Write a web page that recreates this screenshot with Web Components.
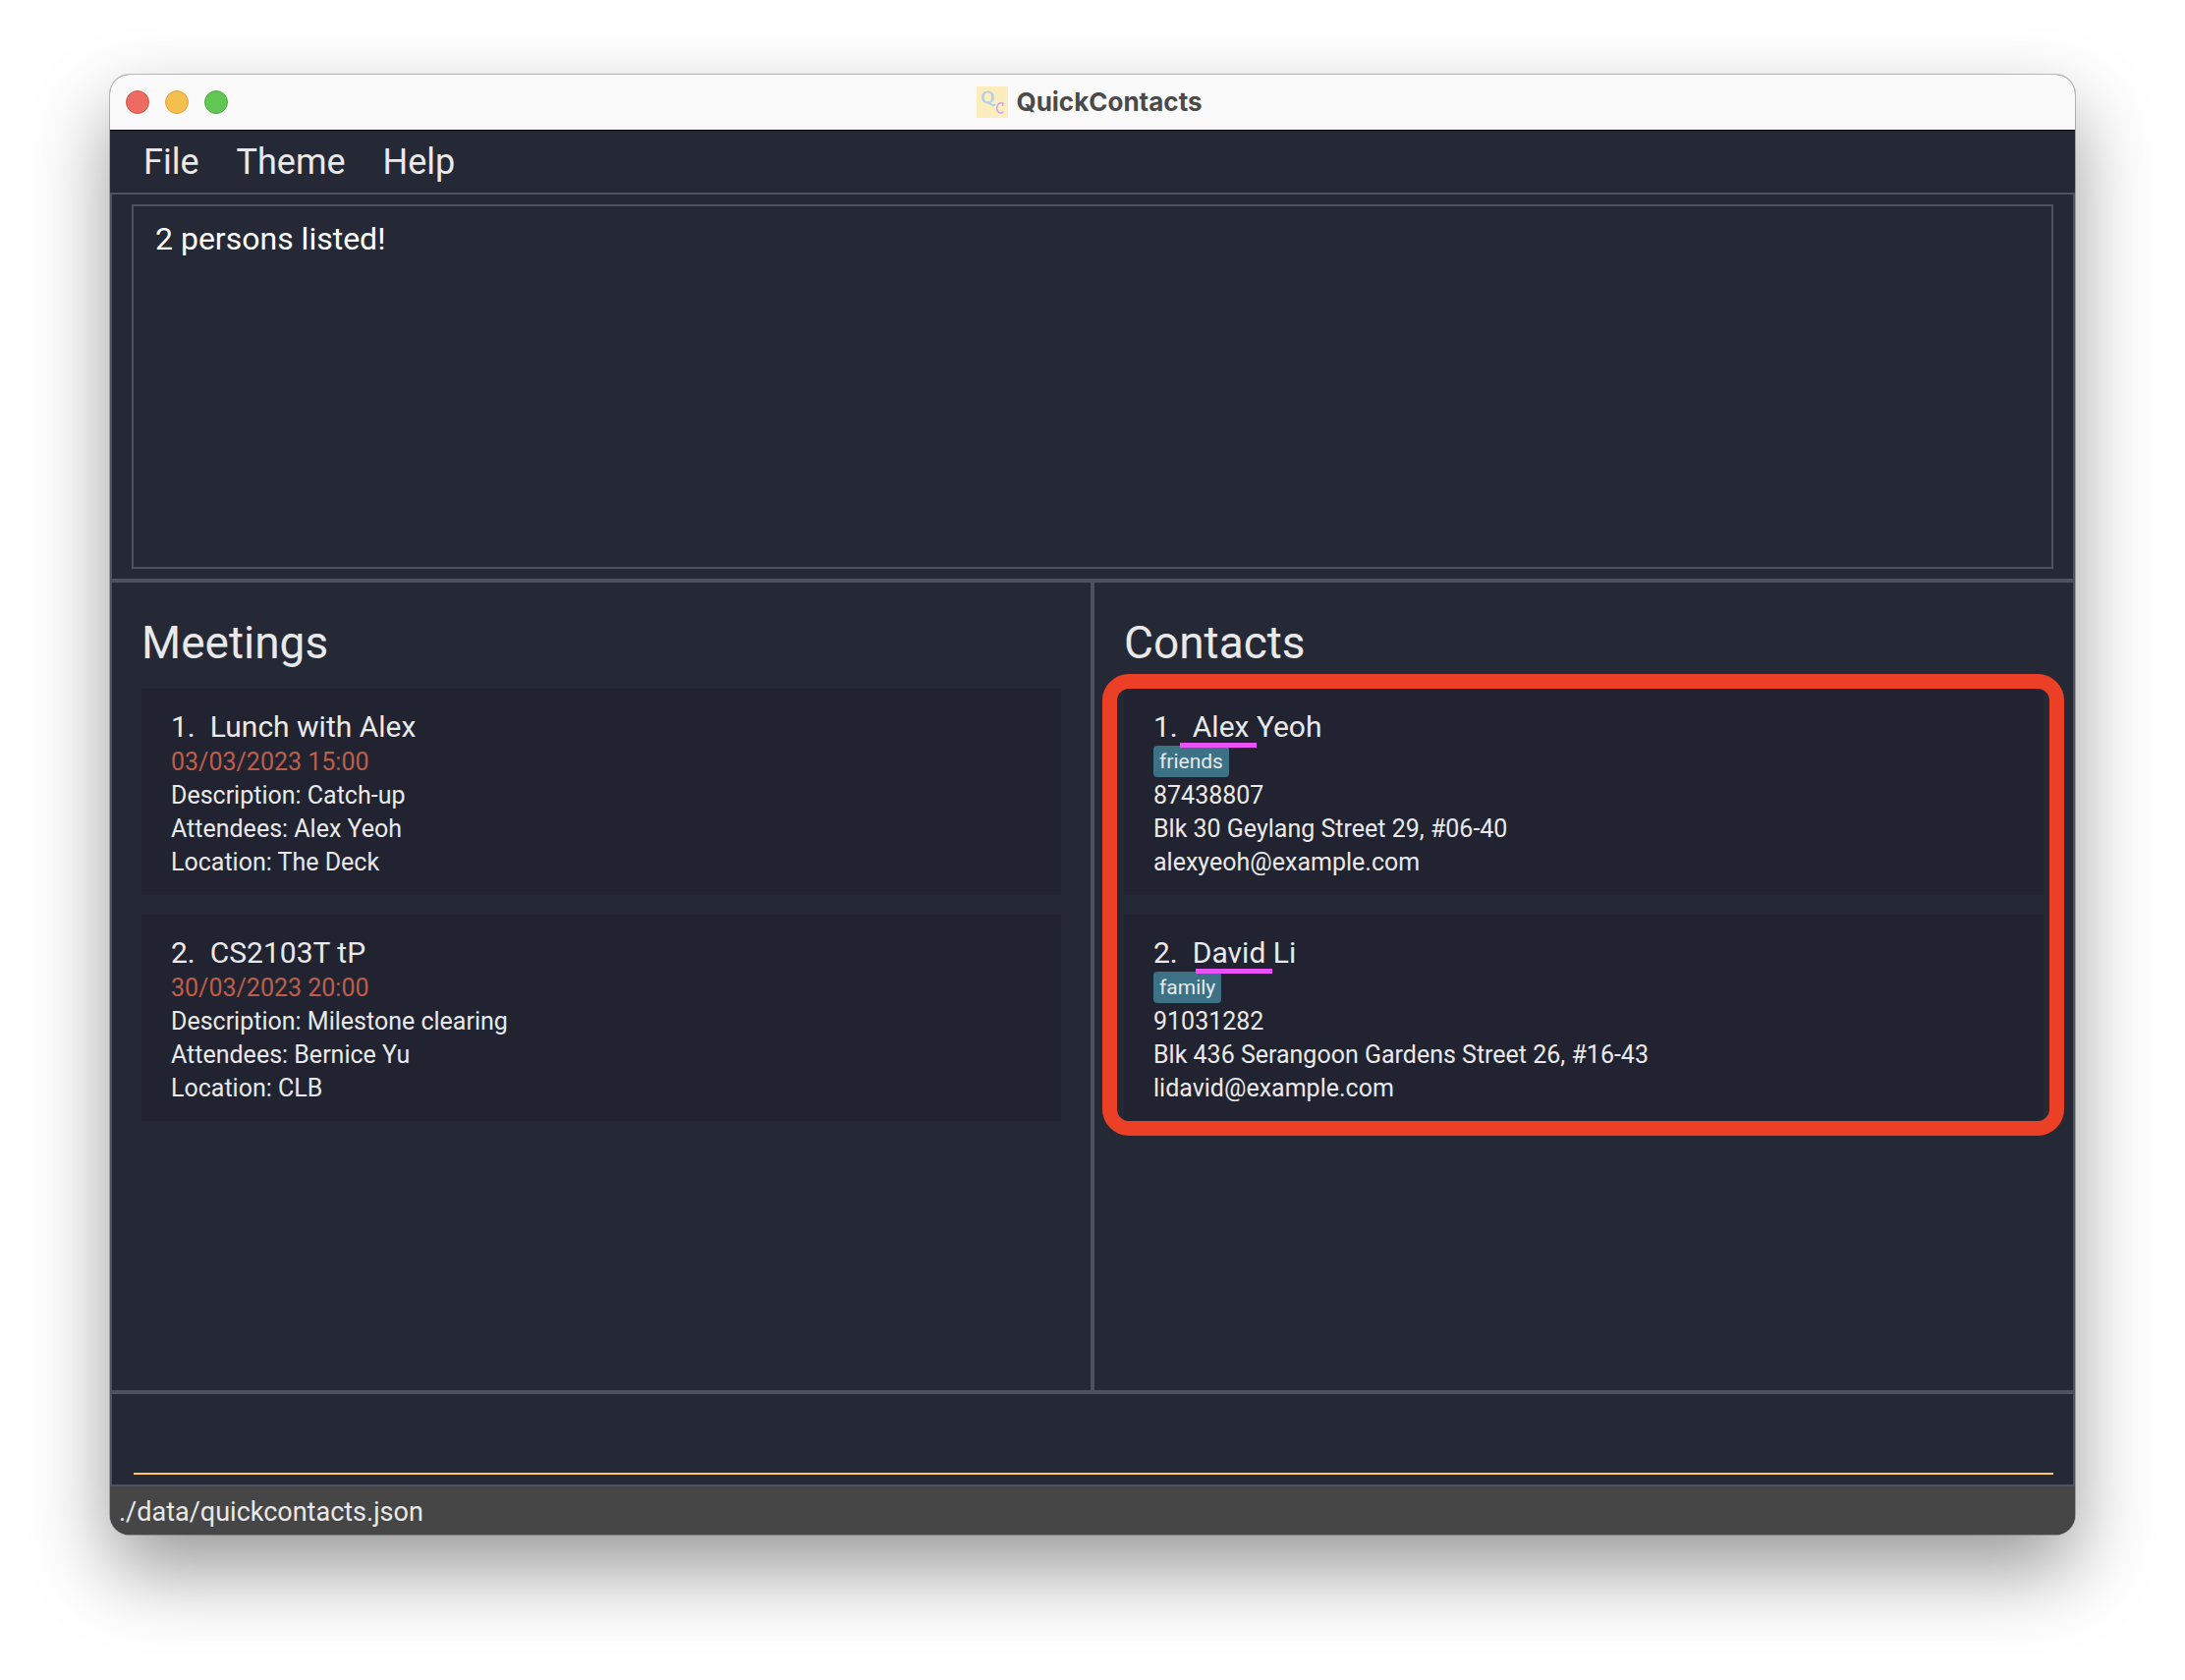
<!DOCTYPE html>
<html lang="en">
<head>
<meta charset="utf-8">
<title>QuickContacts</title>
<style>
  :root {
    --bg: #242935;
    --card: #212430;
    --line: #4c525e;
    --text: #e9e9eb;
    --accent: #ffc85a;
    --date: #bd5e4b;
    --tag: #3c7186;
  }
  * { box-sizing: border-box; }
  body {
    margin: 0;
    min-height: 100vh;
    padding: 76px 112px 148px;
    display: flex;
    background: #fff;
    font-family: Roboto, "Liberation Sans", sans-serif;
    color: var(--text);
  }
</style>
</head>
<body>
<qc-window>
  <qc-title-bar slot="title">QuickContacts</qc-title-bar>
  <qc-menu-bar slot="menu"></qc-menu-bar>
  <qc-result-display slot="result" message="2 persons listed!"></qc-result-display>
  <qc-panel slot="left" heading="Meetings">
    <qc-meeting-card index="1" when="03/03/2023 15:00" description="Catch-up" attendees="Alex Yeoh" location="The Deck">Lunch with Alex</qc-meeting-card>
    <qc-meeting-card index="2" when="30/03/2023 20:00" description="Milestone clearing" attendees="Bernice Yu" location="CLB">CS2103T tP</qc-meeting-card>
  </qc-panel>
  <qc-panel slot="right" heading="Contacts" highlighted>
    <qc-contact-card index="1" tag="friends" phone="87438807" address="Blk 30 Geylang Street 29, #06-40" email="alexyeoh@example.com" style="--mark-x: 57px">Alex Yeoh</qc-contact-card>
    <qc-contact-card index="2" tag="family" phone="91031282" address="Blk 436 Serangoon Gardens Street 26, #16-43" email="lidavid@example.com" style="--mark-x: 73px">David Li</qc-contact-card>
  </qc-panel>
  <qc-command-box slot="command"></qc-command-box>
  <qc-status-bar slot="status">./data/quickcontacts.json</qc-status-bar>
</qc-window>

<script>
const RESET = '*, *::before, *::after { box-sizing: border-box; } ';

class QcElement extends HTMLElement {
  connectedCallback() {
    if (this.shadowRoot) return;
    this.attachShadow({ mode: 'open' }).innerHTML =
      `<style>${RESET}${this.styles()}</style>${this.markup()}`;
  }
  attr(name) { return this.getAttribute(name) || ''; }
}

class QcWindow extends QcElement {
  styles() {
    return `
      :host {
        flex: 1; min-width: 0; display: flex; flex-direction: column; overflow: hidden;
        border-radius: 20px; background: var(--bg);
        box-shadow: 0 0 0 1px rgba(0,0,0,.24), 0 36px 80px rgba(0,0,0,.4);
      }
      main { flex: 1; display: flex; flex-direction: column; border: 2px solid var(--line); }
      .split { flex: 1; display: flex; border: solid var(--line); border-width: 4px 0; }
      .split > div { flex: 1 1 0; min-width: 0; }
      .bar { flex: 0 0 4px; background: var(--line); }`;
  }
  markup() {
    return `
      <slot name="title"></slot>
      <slot name="menu"></slot>
      <main>
        <slot name="result"></slot>
        <div class="split">
          <div><slot name="left"></slot></div>
          <span class="bar"></span>
          <div><slot name="right"></slot></div>
        </div>
        <slot name="command"></slot>
      </main>
      <slot name="status"></slot>`;
  }
}

class QcTitleBar extends QcElement {
  styles() {
    return `
      :host {
        display: grid; grid-template-columns: 1fr auto 1fr; align-items: center;
        height: 56px; padding: 0 22px 0 16px; background: #fafafa; color: #4a4a4a;
      }
      .lights { display: flex; gap: 16px; }
      button { width: 24px; height: 24px; padding: 0; border: 1px solid; border-radius: 50%; }
      .close { background: #ed6b60; border-color: #d5564b; }
      .min { background: #f5bf4f; border-color: #dba23b; }
      .max { background: #62c655; border-color: #4fab42; }
      .title {
        display: flex; align-items: center; gap: 8px; margin: 0;
        font: bold 26px/32px Inter, sans-serif;
      }
      svg { display: block; }`;
  }
  markup() {
    return `
      <div class="lights">
        <button class="close" aria-label="Close"></button>
        <button class="min" aria-label="Minimise"></button>
        <button class="max" aria-label="Zoom"></button>
      </div>
      <h1 class="title">
        <svg width="32" height="32" viewBox="0 0 32 32" aria-hidden="true">
          <rect width="32" height="32" fill="#fcedbd"/>
          <path fill-rule="evenodd" d="M11.500 4.800c3.900 0 6.500 2.700 6.500 6.200s-2.600 6.200-6.500 6.200S5 14.500 5 11s2.600-6.200 6.500-6.200zm0 1.400c-2.200 0-3.700 1.900-3.700 4.800s1.500 4.800 3.700 4.800 3.700-1.900 3.700-4.800-1.500-4.800-3.700-4.800z" fill="#add1f0"/>
          <path d="M10 16.500c2.200-.6 3.200.6 4.400 1.600 1.200 1.100 3 1.500 4.600.1" fill="none" stroke="#add1f0" stroke-width="2"/>
          <path d="M26.800 20v-2.800c-3.200-1.400-6.200 1-6.200 5s3.200 6 6.600 3.800" fill="none" stroke="#c9a6ec" stroke-width="1.500"/>
        </svg>
        <slot></slot>
      </h1>
      <span></span>`;
  }
}

class QcMenuBar extends QcElement {
  styles() {
    return `
      :host { display: block; border-top: 1px solid #05070d; }
      nav { display: flex; gap: 38px; height: 63px; padding: 0 34px; align-items: center; }
      button { padding: 0; border: 0; background: none; color: inherit; font: 36px/44px Roboto, sans-serif; }`;
  }
  markup() {
    return `<nav aria-label="Main menu">
      <button>File</button><button>Theme</button><button>Help</button>
    </nav>`;
  }
}

class QcResultDisplay extends QcElement {
  styles() {
    return `
      :host { display: block; padding: 10px 20px; }
      textarea {
        display: block; width: 100%; height: 371px; padding: 14px 22px; resize: none; outline: 0;
        border: 2px solid var(--line); border-radius: 0; background: none; color: #fff;
        font: 32px/38px Roboto, sans-serif;
      }`;
  }
  markup() { return `<textarea readonly aria-label="Result">${this.attr('message')}</textarea>`; }
}

class QcPanel extends QcElement {
  styles() {
    return `
      :host { display: block; padding: 32px 30px; }
      h2 { margin: 0 0 18px; font-size: 46px; line-height: 58px; font-weight: 400; }
      .list { position: relative; display: flex; flex-direction: column; gap: 20px; }
      :host([highlighted]) .list::after {
        content: ""; position: absolute; inset: -15px -21px -15px -22px;
        border: 15px solid #eb4026; border-radius: 27px; pointer-events: none;
      }`;
  }
  markup() {
    return `<h2>${this.attr('heading')}</h2><div class="list"><slot></slot></div>`;
  }
}

const CARD = `
  :host {
    display: block; position: relative; padding: 20px 30px 16px;
    background: var(--card); font-size: 25px; line-height: 34px;
  }
  h3 { display: flex; gap: 15px; margin: 0; font-size: 30px; line-height: 38px; font-weight: 400; }
  p { margin: 0; }`;

class QcMeetingCard extends QcElement {
  styles() { return CARD + '.when { color: var(--date); }'; }
  markup() {
    return `
      <h3><span>${this.attr('index')}.</span><span><slot></slot></span></h3>
      <p class="when">${this.attr('when')}</p>
      <p>Description: ${this.attr('description')}</p>
      <p>Attendees: ${this.attr('attendees')}</p>
      <p>Location: ${this.attr('location')}</p>`;
  }
}

class QcContactCard extends QcElement {
  styles() {
    return CARD + `
      .tags { display: flex; height: 34px; align-items: flex-start; }
      .tag { padding: 0 6px; border-radius: 4px; background: var(--tag); font-size: 21px; line-height: 32px; }
      .mark { position: absolute; left: var(--mark-x); top: 55px; width: 78px; height: 5px; background: #ea52f8; }`;
  }
  markup() {
    return `
      <h3><span>${this.attr('index')}.</span><span><slot></slot></span></h3>
      <div class="tags"><span class="tag">${this.attr('tag')}</span></div>
      <p>${this.attr('phone')}</p>
      <p>${this.attr('address')}</p>
      <p>${this.attr('email')}</p>
      <span class="mark"></span>`;
  }
}

class QcCommandBox extends QcElement {
  styles() {
    return `
      :host { display: block; padding: 20px 20px 10px 22px; }
      input {
        display: block; width: 100%; height: 62px; padding: 0; outline: 0; border: 0;
        border-bottom: 2px solid var(--accent); border-radius: 0;
        background: none; color: #fff; font: 32px/38px Roboto, sans-serif;
      }`;
  }
  markup() { return `<input type="text" aria-label="Command">`; }
}

class QcStatusBar extends QcElement {
  styles() {
    return `:host { display: block; height: 49px; padding: 4px 9px; background: #464646;
      font-size: 27px; line-height: 44px; }`;
  }
  markup() { return `<slot></slot>`; }
}

customElements.define('qc-window', QcWindow);
customElements.define('qc-title-bar', QcTitleBar);
customElements.define('qc-menu-bar', QcMenuBar);
customElements.define('qc-result-display', QcResultDisplay);
customElements.define('qc-panel', QcPanel);
customElements.define('qc-meeting-card', QcMeetingCard);
customElements.define('qc-contact-card', QcContactCard);
customElements.define('qc-command-box', QcCommandBox);
customElements.define('qc-status-bar', QcStatusBar);
</script>
</body>
</html>
